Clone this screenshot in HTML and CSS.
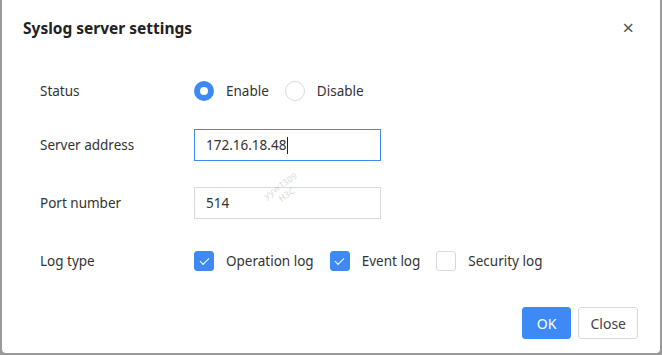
FILE: index.html
```html
<!DOCTYPE html>
<html lang="en">
<head>
  <meta charset="UTF-8">
  <title>Syslog server settings</title>
  <link rel="stylesheet" href="styles.css">
</head>
<body>

  <div class="dialog">
    <div class="dialog-header">
      <h2>Syslog server settings</h2>
      <span class="close-x">&times;</span>
    </div>

    <div class="form">
      <div class="row first">
        <div class="label">Status</div>
        <div class="field">
          <label class="option"><span class="radio checked"></span>Enable</label>
          <label class="option"><span class="radio"></span>Disable</label>
        </div>
      </div>

      <div class="row">
        <div class="label">Server address</div>
        <div class="field">
          <div class="input focused">172.16.18.48<span class="caret"></span></div>
        </div>
      </div>

      <div class="row">
        <div class="label">Port number</div>
        <div class="field">
          <div class="input">514</div>
          <div class="watermark">yyw1309<br>H3C</div>
        </div>
      </div>

      <div class="row">
        <div class="label">Log type</div>
        <div class="field">
          <label class="option"><span class="check checked"></span>Operation log</label>
          <label class="option"><span class="check checked"></span>Event log</label>
          <label class="option"><span class="check"></span>Security log</label>
        </div>
      </div>
    </div>

    <div class="dialog-footer">
      <button class="btn primary">OK</button>
      <button class="btn">Close</button>
    </div>
  </div>

</body>
</html>
```

FILE: styles.css
```css
html, body {
  margin: 0;
  height: 100%;
}

body {
  font-family: 'Noto Sans', 'Open Sans', sans-serif;
  font-size: 13.5px;
  color: #333;
  background: #9a9a9a;
  padding: 0 2px 2px 2px;
  box-sizing: border-box;
}

.dialog {
  background: #fff;
  height: 100%;
  border-radius: 0 0 4px 4px;
  display: flex;
  flex-direction: column;
}

.dialog-header {
  display: flex;
  align-items: center;
  justify-content: space-between;
  height: 56px;
  padding: 0 26px 0 21px;
}

.dialog-header h2 {
  margin: 0;
  font-size: 15.5px;
  font-weight: bold;
  color: #222;
}

.close-x {
  font-size: 20px;
  color: #555;
  line-height: 1;
}

.form {
  padding: 10px 0 0 38px;
  flex: 1;
}

.row {
  display: flex;
  align-items: center;
  height: 58px;
}

.row.first {
  height: 50px;
}

.label {
  width: 154px;
}

.field {
  display: flex;
  align-items: center;
  position: relative;
}

.option {
  display: flex;
  align-items: center;
  margin-right: 16px;
}

.radio {
  width: 20px;
  height: 20px;
  border: 1px solid #d9d9d9;
  border-radius: 50%;
  margin-right: 12px;
  box-sizing: border-box;
}

.radio.checked {
  border: 6px solid #3d8af7;
  background: #fff;
}

.check {
  width: 20px;
  height: 20px;
  border: 1px solid #d9d9d9;
  border-radius: 3px;
  margin-right: 12px;
  box-sizing: border-box;
  display: flex;
  align-items: center;
  justify-content: center;
}

.check.checked {
  background: #3d8af7;
  border-color: #3d8af7;
}

.check.checked::after {
  content: "";
  width: 4px;
  height: 8px;
  border: solid #fff;
  border-width: 0 1.5px 1.5px 0;
  transform: rotate(45deg) translate(-1px, -1px);
}

.input {
  width: 187px;
  height: 32px;
  border: 1px solid #d9d9d9;
  box-sizing: border-box;
  padding: 0 11px;
  display: flex;
  align-items: center;
}

.input.focused {
  border-color: #3d8af7;
}

.caret {
  width: 1px;
  height: 17px;
  background: #222;
  margin-left: 1px;
}

.watermark {
  position: absolute;
  left: 70px;
  top: -8px;
  font-size: 9px;
  font-weight: bold;
  line-height: 11px;
  color: rgba(0, 0, 0, 0.12);
  transform: rotate(-35deg);
  text-align: center;
}

.dialog-footer {
  display: flex;
  justify-content: flex-end;
  gap: 7px;
  padding: 0 22px 14px 0;
}

.btn {
  font-family: inherit;
  font-size: 14px;
  height: 32px;
  padding: 0 11px;
  border: 1px solid #d9d9d9;
  border-radius: 3px;
  background: #fff;
  color: #444;
}

.btn.primary {
  background: #3d8af7;
  border-color: #3d8af7;
  color: #fff;
  padding: 0 14px;
}
```
